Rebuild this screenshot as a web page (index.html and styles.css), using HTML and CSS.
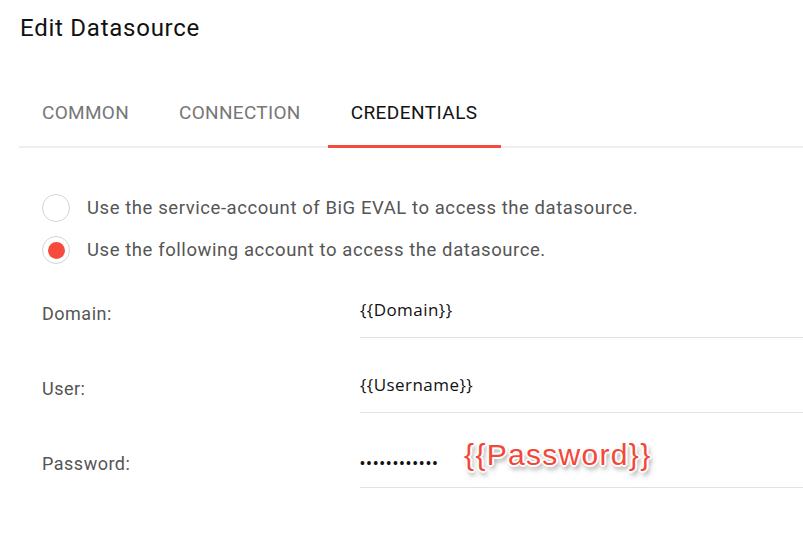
FILE: index.html
```html
<!DOCTYPE html>
<html>
<head>
<meta charset="utf-8">
<link rel="stylesheet" href="styles.css">
</head>
<body>
<div class="page">
  <h1 class="title">Edit Datasource</h1>
  <div class="tabs">
    <div class="tab">COMMON</div>
    <div class="tab">CONNECTION</div>
    <div class="tab active">CREDENTIALS</div>
  </div>
  <div class="content">
    <div class="radios">
      <label class="radio"><span class="circle"></span><span class="rtext">Use the service-account of BiG EVAL to access the datasource.</span></label>
      <label class="radio checked"><span class="circle"><span class="dot"></span></span><span class="rtext">Use the following account to access the datasource.</span></label>
    </div>
    <div class="fields">
      <div class="row"><div class="label">Domain:</div><div class="value">{{Domain}}</div></div>
      <div class="row"><div class="label">User:</div><div class="value">{{Username}}</div></div>
      <div class="row"><div class="label">Password:</div><div class="value pw"><span class="dots">••••••••••••</span><span class="note">{{Password}}</span></div></div>
    </div>
  </div>
</div>
</body>
</html>
```
FILE: styles.css
```css
html, body { margin: 0; padding: 0; background: #fff; }
body { font-family: Roboto, "Liberation Sans", sans-serif; overflow: hidden; }
.page { padding: 0 0 0 19px; }
.title { margin: 0; padding-top: 14px; height: 43px; font-size: 24px; font-weight: 400; letter-spacing: 0.75px; color: #111; padding-left: 1px; line-height: 28px; }
.tabs { display: flex; gap: 4px; margin-top: 23px; border-bottom: 2px solid #eee; height: 66px; }
.tab { padding: 0 23px; font-size: 19px; letter-spacing: 0.3px; color: #777; line-height: 66px; border-bottom: 3px solid transparent; margin-bottom: -2px; }
.tab.active { color: #111; border-bottom-color: #f44b3c; letter-spacing: 0.45px; }
.content { padding-left: 23px; padding-top: 46px; }
.radios { display: flex; flex-direction: column; gap: 14px; }
.radio { display: flex; align-items: center; gap: 17px; height: 28px; }
.circle { width: 26px; height: 26px; border: 1px solid #d4d4d4; border-radius: 50%; display: flex; align-items: center; justify-content: center; }
.dot { width: 17px; height: 17px; border-radius: 50%; background: #f44b3c; }
.rtext { font-size: 18.5px; letter-spacing: 0.57px; color: #555; }
.fields { padding-top: 29px; }
.row { display: flex; align-items: flex-start; height: 75px; }
.label { width: 318px; font-size: 18px; letter-spacing: 0.5px; color: #555; padding-top: 10px; }
.value { flex: 1; border-bottom: 1px solid #e2e2e2; font-family: "Open Sans", sans-serif; font-size: 17px; letter-spacing: 0.45px; color: #111; padding-top: 5px; box-sizing: border-box; height: 45px; display: flex; align-items: flex-start; }
.dots { font-size: 13px; letter-spacing: 1.7px; padding-top: 6px; font-weight: 700; }
.note { font-family: Arial, "Liberation Sans", sans-serif; font-size: 30px; letter-spacing: 1.3px; color: #f4473a; margin-left: 25px; margin-top: -10px; text-shadow: -1px -1px 0 #fff, 1px -1px 0 #fff, -1px 1px 0 #fff, 1px 1px 0 #fff, 0 -2px 0 #fff, 0 2px 0 #fff, 2px 0 0 #fff, -2px 0 0 #fff, 2px 4px 5px rgba(0,0,0,0.5); }
```
